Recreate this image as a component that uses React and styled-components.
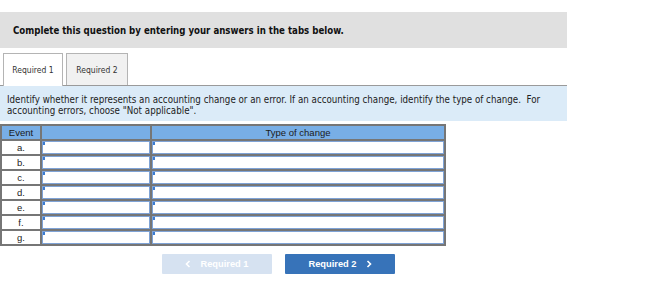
import React from 'react';
import styled, { createGlobalStyle } from 'styled-components';

const Global = createGlobalStyle`
body {
  margin: 0;
  background: #fff;
  font-family: 'DejaVu Sans Condensed', 'DejaVu Sans', Verdana, sans-serif;
  font-stretch: condensed;
}
`;

const Page = styled.div`
width: 567px;
padding-top: 12px;
`;

const Header = styled.div`
height: 36px;
background: #e0e0e0;
display: flex;
align-items: center;
padding-left: 13px;
font-size: 9.6px;
font-weight: bold;
color: #111;
`;

const Tabs = styled.div`
display: flex;
gap: 3px;
padding-left: 3px;
margin-top: 5px;
`;

const Tab = styled.div`
width: ${p => p.w}px;
box-sizing: border-box;
border: 1px solid #b4b4b4;
border-bottom: none;
background: ${p => (p.active ? '#fff' : '#f1f1f1')};
display: flex;
align-items: center;
justify-content: center;
font-size: 8.5px;
color: #333;
margin-bottom: ${p => (p.active ? '-1px' : '0')};
height: ${p => (p.active ? '33px' : '32px')};
position: relative;
z-index: 1;
`;

const Instructions = styled.div`
border-top: 1px solid #9a9a9a;
background: #dbebf8;
height: 36px;
box-sizing: border-box;
padding: 8px 7px 0;
font-size: 9.7px;
line-height: 11px;
color: #222;
white-space: nowrap;
`;

const Table = styled.table`
margin-top: 3px;
width: 446px;
border-collapse: collapse;
table-layout: fixed;
font-family: 'Liberation Sans', Arial, sans-serif;
font-stretch: normal;
font-size: 9.5px;
`;

const Th = styled.th`
border: 2px solid #767676;
background: #78aee6;
height: 13px;
padding: 0;
font-weight: normal;
color: #1a1a1a;
text-align: center;
`;

const EventCell = styled.td`
border: 2px solid #767676;
height: 13px;
padding: 0;
text-align: center;
color: #222;
`;

const InputCell = styled.td`
border: 2px solid #767676;
padding: 0;
height: 13px;
`;

const Field = styled.div`
height: 13px;
box-sizing: border-box;
border: 1px solid #7fa3d6;
background: #fff;
position: relative;
&::before {
  content: '';
  position: absolute;
  left: 0;
  top: 0;
  width: 2px;
  height: 3px;
  background: #3b7bd0;
}
`;

const Actions = styled.div`
display: flex;
gap: 13px;
padding-left: 162px;
margin-top: 8px;
`;

const NavButton = styled.div`
width: 110px;
height: 20px;
display: flex;
align-items: center;
justify-content: center;
gap: 9px;
background: ${p => (p.disabled ? '#d6e2f1' : '#3773b9')};
color: #fff;
font-family: 'Liberation Sans', Arial, sans-serif;
font-stretch: normal;
font-weight: bold;
font-size: 9.3px;
border-radius: 1px;
`;

const Chevron = ({ left }) => (
  <svg width="6" height="8" viewBox="0 0 6 8">
    <path
      d={left ? 'M4.5 1 L1.5 4 L4.5 7' : 'M1.5 1 L4.5 4 L1.5 7'}
      fill="none"
      stroke="#fff"
      strokeWidth="1.6"
    />
  </svg>
);

const events = ['a.', 'b.', 'c.', 'd.', 'e.', 'f.', 'g.'];

export default function App() {
  return (
    <Page>
      <Global />
      <Header>Complete this question by entering your answers in the tabs below.</Header>

      <Tabs>
        <Tab w={60} active>Required 1</Tab>
        <Tab w={62}>Required 2</Tab>
      </Tabs>

      <Instructions>
        Identify whether it represents an accounting change or an error. If an accounting change, identify the type of change.&nbsp; For
        <br />
        accounting errors, choose "Not applicable".
      </Instructions>

      <Table>
        <colgroup>
          <col style={{ width: 40 }} />
          <col style={{ width: 110 }} />
          <col />
        </colgroup>
        <thead>
          <tr>
            <Th>Event</Th>
            <Th></Th>
            <Th>Type of change</Th>
          </tr>
        </thead>
        <tbody>
          {events.map(e => (
            <tr key={e}>
              <EventCell>{e}</EventCell>
              <InputCell><Field /></InputCell>
              <InputCell><Field /></InputCell>
            </tr>
          ))}
        </tbody>
      </Table>

      <Actions>
        <NavButton disabled>
          <Chevron left />
          Required 1
        </NavButton>
        <NavButton>
          Required 2
          <Chevron />
        </NavButton>
      </Actions>
    </Page>
  );
}
